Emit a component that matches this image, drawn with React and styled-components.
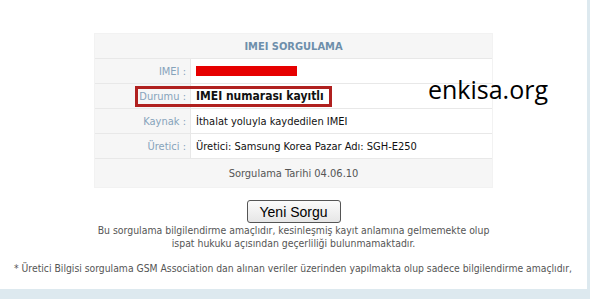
import React from 'react';
import styled, { createGlobalStyle } from 'styled-components';

const colors = {
  label: '#86a3bb',
  head: '#6e8fab',
  cellGray: '#f6f6f6',
  line: '#e8e8e8',
  text: '#111111',
  muted: '#555555',
  frame: '#dde9ef',
};

const GlobalStyle = createGlobalStyle`
  html, body { margin: 0; padding: 0; background: #fff; }
  body { font-family: "DejaVu Sans Condensed", "DejaVu Sans", sans-serif; }
`;

const Page = styled.div`
  position: relative;
  width: 587px;
  height: 256px;
  padding-top: 33px;
  border-right: 3px solid ${colors.frame};
  border-bottom: 10px solid ${colors.frame};
`;

const Table = styled.div`
  margin-left: 94px;
  width: 399px;
  background: ${colors.cellGray};
  border: 1px solid #f2f2f2;
  box-sizing: border-box;
`;

const HeadRow = styled.div`
  height: 25px;
  display: flex;
  align-items: center;
  justify-content: center;
  border-bottom: 1px solid ${colors.line};
  font-size: 11px;
  font-weight: bold;
  color: ${colors.head};
  box-sizing: border-box;
`;

const Row = styled.div`
  position: relative;
  display: grid;
  grid-template-columns: 96px 1fr;
  height: 25px;
  border-bottom: 1px solid ${colors.line};
  box-sizing: border-box;
`;

const Label = styled.div`
  display: flex;
  align-items: center;
  justify-content: flex-end;
  padding-right: 4px;
  font-size: 11px;
  color: ${colors.label};
  border-right: 1px solid ${colors.line};
`;

const Value = styled.div`
  display: flex;
  align-items: center;
  padding-left: 5px;
  background: #ffffff;
  color: ${colors.text};
  font-size: ${(p) => (p.$bold ? '12px' : '11px')};
  font-weight: ${(p) => (p.$bold ? 'bold' : 'normal')};
`;

const Redacted = styled.span`
  display: inline-block;
  width: 101px;
  height: 10px;
  background: #e60000;
`;

const Highlight = styled.div`
  position: absolute;
  left: 40px;
  top: 2px;
  width: 197px;
  height: 21px;
  border: 3px solid #b0201f;
  box-sizing: border-box;
  pointer-events: none;
`;

const FootRow = styled.div`
  height: 28px;
  display: flex;
  align-items: center;
  justify-content: center;
  font-size: 11px;
  color: ${colors.muted};
`;

const Actions = styled.div`
  display: flex;
  flex-direction: column;
  align-items: center;
  margin-top: 12px;
`;

const Button = styled.button`
  width: 94px;
  height: 23px;
  padding: 0;
  font-family: "Liberation Sans", Arial, sans-serif;
  font-size: 14px;
  color: #000;
  background: linear-gradient(#fbfbfb, #e6e6e6);
  border: 1px solid #555;
  border-radius: 3px;
`;

const Note = styled.p`
  margin: 1px 0 0;
  text-align: center;
  font-size: 10.4px;
  line-height: 13px;
  color: ${colors.muted};
`;

const Footnote = styled.p`
  margin: 12px 0 0 14px;
  font-size: 10.3px;
  color: ${colors.muted};
  white-space: nowrap;
`;

const Watermark = styled.div`
  position: absolute;
  left: 428px;
  top: 72px;
  font-family: "Open Sans", sans-serif;
  font-size: 25px;
  color: #000;
`;

const rows = [
  { label: 'Kaynak', value: 'İthalat yoluyla kaydedilen IMEI' },
  { label: 'Üretici', value: 'Üretici: Samsung Korea Pazar Adı: SGH-E250' },
];

export default function App() {
  return (
    <>
      <GlobalStyle />
      <Page>
        <Table>
          <HeadRow>IMEI SORGULAMA</HeadRow>
          <Row>
            <Label>IMEI :</Label>
            <Value><Redacted /></Value>
          </Row>
          <Row>
            <Label>Durumu :</Label>
            <Value $bold>IMEI numarası kayıtlı</Value>
            <Highlight />
          </Row>
          {rows.map((r) => (
            <Row key={r.label}>
              <Label>{r.label} :</Label>
              <Value>{r.value}</Value>
            </Row>
          ))}
          <FootRow>Sorgulama Tarihi 04.06.10</FootRow>
        </Table>
        <Actions>
          <Button>Yeni Sorgu</Button>
          <Note>
            Bu sorgulama bilgilendirme amaçlıdır, kesinleşmiş kayıt anlamına gelmemekte olup
            <br />
            ispat hukuku açısından geçerliliği bulunmamaktadır.
          </Note>
        </Actions>
        <Footnote>
          * Üretici Bilgisi sorgulama GSM Association dan alınan veriler üzerinden yapılmakta olup sadece bilgilendirme amaçlıdır,
        </Footnote>
        <Watermark>enkisa.org</Watermark>
      </Page>
    </>
  );
}
